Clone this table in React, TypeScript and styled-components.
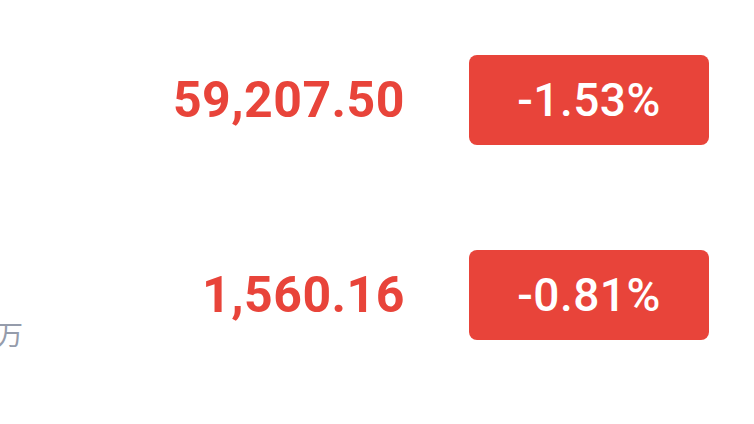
import React from "react";
import styled, { createGlobalStyle } from "styled-components";

const Global = createGlobalStyle`
  html, body { margin: 0; padding: 0; background: #ffffff; }
  body { font-family: Roboto, "Noto Sans CJK SC", sans-serif; }
`;

const Page = styled.div`
  width: 754px;
  height: 424px;
  overflow: hidden;
  background: #ffffff;
  display: flex;
  flex-direction: column;
  padding-top: 2px;
  box-sizing: border-box;
`;

const Row = styled.div`
  height: 195px;
  display: flex;
  align-items: center;
  padding-right: 45px;
  flex-shrink: 0;
`;

const Info = styled.div`
  flex: 1;
  align-self: stretch;
  display: flex;
  flex-direction: column;
  justify-content: flex-end;
  padding-bottom: 42px;
  overflow: hidden;
`;

const Sub = styled.span`
  font-family: "Noto Sans CJK SC", sans-serif;
  font-size: 27px;
  line-height: 32px;
  color: #959cab;
  white-space: nowrap;
  margin-left: -4px;
`;

const Price = styled.div`
  font-family: Roboto, sans-serif;
  font-weight: 700;
  font-size: 50px;
  letter-spacing: 0.5px;
  color: #e8443a;
  margin-right: 64px;
`;

const Badge = styled.div`
  width: 240px;
  height: 90px;
  border-radius: 8px;
  background: #e8443a;
  color: #ffffff;
  display: flex;
  align-items: center;
  justify-content: center;
  font-family: Roboto, sans-serif;
  font-weight: 500;
  font-size: 46px;
  letter-spacing: 0.5px;
`;

const rows = [
  { price: "59,207.50", change: "-1.53%", sub: "" },
  { price: "1,560.16", change: "-0.81%", sub: "万" },
];

export default function App() {
  return (
    <Page>
      <Global />
      {rows.map((r) => (
        <Row key={r.price}>
          <Info>{r.sub && <Sub>{r.sub}</Sub>}</Info>
          <Price>{r.price}</Price>
          <Badge>{r.change}</Badge>
        </Row>
      ))}
    </Page>
  );
}
